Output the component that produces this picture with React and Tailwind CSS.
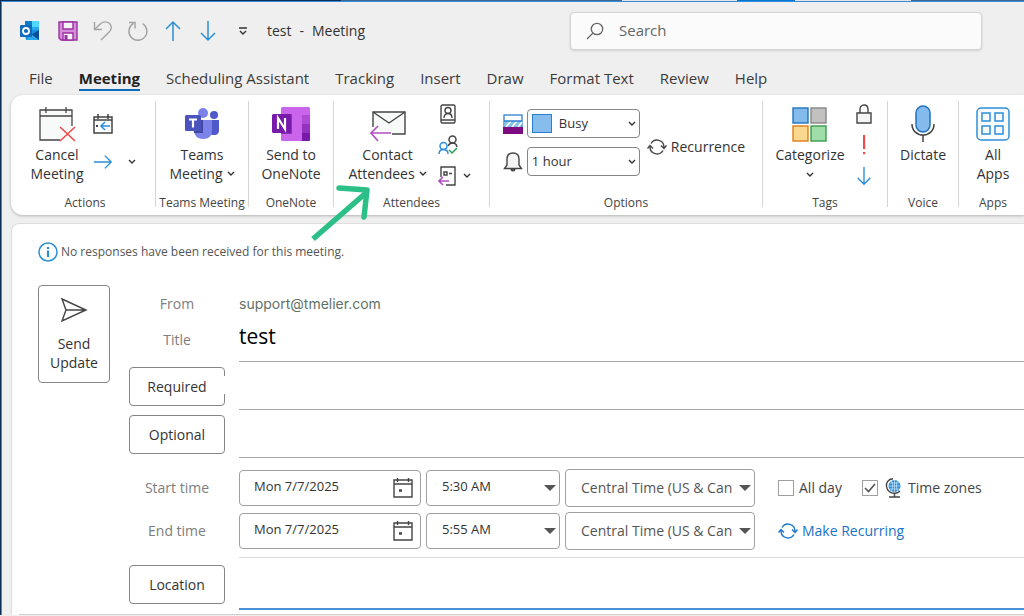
import { useState } from "react";

const tabs = ["File", "Meeting", "Scheduling Assistant", "Tracking", "Insert", "Draw", "Format Text", "Review", "Help"];

function Caret({ className = "" }) {
    return (
        <svg className={className} width="8" height="6" viewBox="0 0 8 6" fill="none" stroke="#333" strokeWidth="1.4">
            <path d="M1 1l3 3 3-3" />
        </svg>
    );
}

function OutlookIcon() {
    return (
        <svg width="22" height="22" viewBox="0 0 22 22">
            <rect x="6" y="1" width="14" height="12" fill="#28a8ea" />
            <rect x="13" y="1" width="7" height="6" fill="#50d9ff" />
            <rect x="6" y="1" width="7" height="5" fill="#0f7cc9" />
            <path d="M5 10h15v10H7z" fill="#1490df" />
            <path d="M12 15l8-5v10h-4z" fill="#0a4f94" />
            <path d="M7 20h13l-8-6z" fill="#28a8ea" />
            <rect x="1" y="5" width="12" height="12" rx="1" fill="#0f6cbd" />
            <circle cx="7" cy="11" r="3" fill="none" stroke="#fff" strokeWidth="1.8" />
        </svg>
    );
}

function SaveIcon() {
    return (
        <svg width="22" height="22" viewBox="0 0 22 22" stroke="#9b2fa3" strokeWidth="1.4">
            <path d="M2 2h18v18H4l-2-2z" fill="#d48fd8" />
            <path d="M6 2h10v7H6z" fill="#f5f5f5" />
            <path d="M6 20v-7h10v7z" fill="#f5f5f5" />
            <path d="M9 15v5" strokeWidth="3" />
        </svg>
    );
}

function UndoIcon() {
    return (
        <svg width="22" height="22" viewBox="0 0 22 22" fill="none" stroke="#a3a3a3" strokeWidth="1.4">
            <path d="M2.5 2v7.5H10M2.5 9.5L8 4.2c3-3 7-3 9.500-.7 2.600 2.500 2.300 6-.3 8.500L9 20" />
        </svg>
    );
}

function RedoIcon() {
    return (
        <svg width="22" height="22" viewBox="0 0 22 22" fill="none" stroke="#a3a3a3" strokeWidth="1.4">
            <path d="M15.5 3.500a9 9 0 1 1-9-.1M2 2.500h6v6" />
        </svg>
    );
}

function ArrowIcon({ d, size = 22 }) {
    return (
        <svg width={size} height={size} viewBox="0 0 22 22" fill="none" stroke="#2b8fd8" strokeWidth="1.5">
            <path d={d} />
        </svg>
    );
}

const ARROW_UP = "M11 21V2M4 9l7-7 7 7";
const ARROW_DOWN = "M11 1v19M4 13l7 7 7-7";
const ARROW_RIGHT = "M1 11h19M13 4l7 7-7 7";

function CancelIcon() {
    return (
        <svg width="38" height="36" viewBox="0 0 38 36" fill="none" stroke="#444" strokeWidth="1.3">
            <path d="M34 20V4H2v30h20" fill="#f8f9f9" />
            <path d="M2 10h32M8 1v6M28 1v6" />
            <path d="M22 21l15 14M37 21L22 35" stroke="#ef4a4a" strokeWidth="1.6" />
        </svg>
    );
}

function CalendarBackIcon() {
    return (
        <svg width="20" height="20" viewBox="0 0 20 20" fill="none" stroke="#444" strokeWidth="1.5">
            <path d="M1 3h18v16H1zM1 6h18M5 0v5M15 0v5" />
            <path d="M17 12H8M12 8l-4 4 4 4" stroke="#2b8fd8" />
            <path d="M3 12h2" strokeWidth="2" />
        </svg>
    );
}

function TeamsIcon() {
    return (
        <svg width="36" height="34" viewBox="0 0 36 34">
            <circle cx="30" cy="8" r="4" fill="#5059c9" />
            <circle cx="19" cy="6" r="5" fill="#7b83eb" />
            <path d="M24 13h11v10c0 4-2 5-5 5-4 0-6-2-6-5z" fill="#5059c9" />
            <path d="M10 13h18v10c0 6-3 9-9 9s-9-4-9-9z" fill="#7b83eb" />
            <path d="M10 13h9v13h-9z" fill="#414a9f" />
            <rect x="1" y="8" width="16" height="16" rx="1.5" fill="#4b53bc" />
            <path d="M5 12.5h8M9 12.5v8" stroke="#fff" strokeWidth="2.2" />
        </svg>
    );
}

function OneNoteIcon() {
    return (
        <svg width="40" height="36" viewBox="0 0 40 36">
            <rect x="10" y="1" width="29" height="34" rx="1.5" fill="#ca64ea" />
            <path d="M31 9h8v9h-8z" fill="#ae4bd5" />
            <path d="M31 18h8v9h-8z" fill="#9332bf" />
            <path d="M31 27h8v6.500q0 1.500-1.500 1.500H31z" fill="#7719aa" />
            <path d="M10 8h11v20H10z" fill="#8a35b5" />
            <rect x="1" y="8" width="19" height="19" rx="1.5" fill="#7719aa" />
            <path d="M7 23V12l7 11V12" fill="none" stroke="#fff" strokeWidth="2.2" />
        </svg>
    );
}

function ContactIcon() {
    return (
        <svg width="38" height="36" viewBox="0 0 38 36" fill="none" stroke="#444" strokeWidth="1.4">
            <path d="M4 21V6h32v22H23" fill="#f8f9f9" />
            <path d="M4 6l16 11L36 6" />
            <path d="M22 27H2M9 20l-7 7 7 8" stroke="#b14fc0" strokeWidth="1.6" />
        </svg>
    );
}

function AddressBookIcon() {
    return (
        <svg width="20" height="20" viewBox="0 0 20 20" fill="none" stroke="#444" strokeWidth="1.4">
            <rect x="3" y="1" width="14" height="18" rx="1.5" />
            <path d="M3 16h14M6 14c0-3 1.500-4.500 4-4.500s4 1.500 4 4.500" />
            <circle cx="10" cy="6.5" r="3" />
        </svg>
    );
}

function PeopleCheckIcon() {
    return (
        <svg width="20" height="20" viewBox="0 0 20 20" fill="none" strokeWidth="1.5">
            <circle cx="14.5" cy="4.5" r="3.5" stroke="#444" />
            <path d="M10 11c1-2 2.500-3 4.500-3s4 1 4.500 4" stroke="#444" />
            <circle cx="5.5" cy="11" r="3.5" stroke="#2b8fd8" />
            <path d="M1 19c0-3 2-4.500 4.500-4.500S10 16 10 19" stroke="#2b8fd8" />
            <path d="M11 15l3 3 5-5" stroke="#2e9e4f" />
        </svg>
    );
}

function ResponseIcon() {
    return (
        <svg width="20" height="20" viewBox="0 0 20 20" fill="none" stroke="#444" strokeWidth="1.4">
            <path d="M3 11V1h14v18H8M6 6h3v3H6zM11 7.500h3" />
            <path d="M11 15H1M5 11l-4 4 4 4" stroke="#b14fc0" strokeWidth="1.6" />
        </svg>
    );
}

function ShowAsIcon() {
    return (
        <svg width="20" height="20" viewBox="0 0 20 20">
            <rect x="1" y="1" width="18" height="12" fill="#fff" stroke="#2b7fd0" strokeWidth="1.3" />
            <path d="M1.5 7h17v5.500h-17z" fill="#8cc3ee" />
            <path d="M3 13l5-6M9 13l5-6M15 13l4-5" stroke="#fff" strokeWidth="1.5" />
            <path d="M1 7h18" stroke="#2b7fd0" strokeWidth="1.3" />
            <path d="M0 13h20v7H0z" fill="#7d0a80" />
        </svg>
    );
}

function BellIcon() {
    return (
        <svg width="20" height="20" viewBox="0 0 20 20" fill="none" stroke="#444" strokeWidth="1.4">
            <path d="M4 13V7c0-4 2.500-6 6-6s6 2 6 6v6l2.500 3.500h-17z" fill="#f5f5f5" />
            <path d="M8 17c.5 2.500 3.500 2.500 4 0" fill="#555" />
        </svg>
    );
}

function RecurIcon({ color }) {
    return (
        <svg width="20" height="20" viewBox="0 0 20 20" fill="none" stroke={color} strokeWidth="1.4">
            <path d="M4 6.500a7 7 0 0 1 13 3.500M16 13.500A7 7 0 0 1 3 10" />
            <path d="M14 8.500l3 3 2.500-3M.5 11.500l2.500-3 3 3" />
        </svg>
    );
}

function CategorizeIcon() {
    return (
        <svg width="36" height="36" viewBox="0 0 36 36" strokeWidth="1.4">
            <rect x="1" y="2" width="15" height="15" fill="#83bbec" stroke="#2273bd" />
            <rect x="19" y="2" width="15" height="15" fill="#c2c1c0" stroke="#868686" />
            <rect x="1" y="20" width="15" height="15" fill="#f9d98f" stroke="#e27d16" />
            <rect x="19" y="20" width="15" height="15" fill="#9fdea9" stroke="#3a9a4e" />
        </svg>
    );
}

function LockIcon() {
    return (
        <svg width="20" height="20" viewBox="0 0 20 20" fill="none" stroke="#444" strokeWidth="1.4">
            <path d="M3 9h14v10H3z" fill="#f5f5f5" />
            <path d="M6 9V5.500C6 3 7.500 1 10 1s4 2 4 4.500V9" />
        </svg>
    );
}

function ImportanceIcon() {
    return (
        <svg width="20" height="20" viewBox="0 0 20 20" fill="#ef4a4a">
            <path d="M9 0h2.200v14H9zM9 17h2.200v2.200H9z" />
        </svg>
    );
}

function MicIcon() {
    return (
        <svg width="24" height="38" viewBox="0 0 24 38" fill="none">
            <rect x="5" y="1" width="14" height="26" rx="7" fill="#83bbec" stroke="#2273bd" strokeWidth="1.5" />
            <path d="M1 19c0 7 5 11 11 11s11-4 11-11M12 30v7" stroke="#444" strokeWidth="1.5" />
        </svg>
    );
}

function AppsIcon() {
    return (
        <svg width="34" height="34" viewBox="0 0 34 34" fill="none" stroke="#2b8fd8" strokeWidth="1.5">
            <rect x="1" y="1" width="32" height="32" rx="4" fill="#f8fafc" />
            <path d="M6 6h8v8H6zM19 6h8v8h-8zM6 19h8v8H6zM19 19h8v8h-8z" />
        </svg>
    );
}

function SendIcon() {
    return (
        <svg width="28" height="24" viewBox="0 0 28 24" fill="none" stroke="#444" strokeWidth="1.4">
            <path d="M2 1l24 11L2 23l4-11zM6 12h20" />
        </svg>
    );
}

function CalendarIcon() {
    return (
        <svg width="20" height="20" viewBox="0 0 20 20" fill="none" stroke="#444" strokeWidth="1.4">
            <path d="M1 2h18v17H1zM1 6h18M4.500 0v4M15.500 0v4" />
            <path d="M6 12.500h3" strokeWidth="2.5" />
        </svg>
    );
}

function GlobeIcon() {
    return (
        <svg width="18" height="20" viewBox="0 0 18 20" fill="none">
            <circle cx="9.5" cy="8" r="6" fill="#2b8fd8" />
            <path d="M4 8h11M5 5h9M5 11h9M9.500 2v12M6.500 3c1.500 3 1.500 7 0 10M12.500 3c-1.500 3-1.500 7 0 10" stroke="#cfe8fa" strokeWidth="0.7" />
            <path d="M8 .7C3 1 1 5 1.500 8.500c.5 4 4 7 8.500 6.700 2-.1 4-1 5-2.200M9.500 15v3.500M4 19h11" stroke="#444" strokeWidth="1.4" />
        </svg>
    );
}

function Group({ label, className = "", last, children }) {
    return (
        <>
            <section className={`flex shrink-0 flex-col ${className}`}>
                <div className="flex h-[94px] justify-center">{children}</div>
                <div className="text-center text-[12px] leading-4 whitespace-nowrap text-[#444]">{label}</div>
            </section>
            {!last && <div className="h-[106px] w-px shrink-0 bg-[#d4d4d4]" />}
        </>
    );
}

function BigButton({ icon, lines, caret, caretBelow }) {
    return (
        <button className="flex shrink-0 flex-col items-center pt-[3px] text-[14px] leading-[19px] whitespace-nowrap">
            <span className="mb-px flex h-10 items-center">{icon}</span>
            {lines.map((line, i) => (
                <span key={line} className="flex items-center gap-1">
                    {line}
                    {caret && i === lines.length - 1 && <Caret />}
                </span>
            ))}
            {caretBelow && <Caret className="mt-2" />}
        </button>
    );
}

function IconButton({ label, children }) {
    return (
        <button aria-label={label} className="flex h-[22px] w-[22px] items-center justify-center">
            {children}
        </button>
    );
}

function MoreButton({ label }) {
    return (
        <button aria-label={label} className="flex h-[22px] w-4 items-center justify-center">
            <Caret />
        </button>
    );
}

function Row({ label, labelFor, button, notch, className = "", children }) {
    return (
        <div className="flex gap-[14px]">
            <div className="flex w-24 shrink-0 items-center justify-center">
                {button ? (
                    <button type="button" className="relative mt-px h-[39px] w-full rounded border border-[#858585] text-[#333]">
                        {label}
                        {notch && <span className="absolute top-2 -right-px h-[18px] w-[3px] bg-white" />}
                    </button>
                ) : (
                    <label htmlFor={labelFor} className="text-[#7d7d7d]">{label}</label>
                )}
            </div>
            <div className={`flex min-w-0 flex-1 items-center ${className}`}>{children}</div>
        </div>
    );
}

function DropDown({ label, value, className = "", box = "" }) {
    return (
        <div className={`relative flex ${box}`}>
            <select aria-label={label} className={`w-full appearance-none rounded border border-[#a0a0a0] bg-white pl-[15px] ${className}`}>
                <option>{value}</option>
            </select>
            <svg className="pointer-events-none absolute top-1/2 right-1 -translate-y-1/2" width="12" height="6" viewBox="0 0 12 6" fill="#555">
                <path d="M0 0h12L6 6z" />
            </svg>
        </div>
    );
}

function TimeFields({ id, name, time }) {
    return (
        <>
            <div className="relative w-[182px]">
                <input id={id} defaultValue="Mon 7/7/2025" className="h-9 w-full rounded border border-[#a0a0a0] pb-1 pl-[14px] text-[13px] text-[#333]" />
                <button type="button" aria-label={`${name} calendar`} className="absolute top-2 right-2">
                    <CalendarIcon />
                </button>
            </div>
            <DropDown label={name} value={time} box="ml-[5px] w-[134px]" className="h-9 pb-1 text-[13px] text-[#333]" />
            <DropDown label={`${name} zone`} value="Central Time (US & Can" box="ml-[5px] w-[190px]" className="h-[38px] text-[14px] text-[#555]" />
        </>
    );
}

function CheckBox({ label, icon, defaultChecked = false }) {
    const [on, setOn] = useState(defaultChecked);
    return (
        <label className="flex items-center text-[14px] text-[#444]">
            <span className="relative mr-[5px] flex">
                <input type="checkbox" checked={on} onChange={() => setOn(!on)} className="h-4 w-4 appearance-none border border-[#a0a0a0] bg-white" />
                {on && (
                    <svg className="pointer-events-none absolute top-0 left-0" width="16" height="16" viewBox="0 0 16 16" fill="none" stroke="#555" strokeWidth="1.6">
                        <path d="M3 8l3.500 3.500L13 4" />
                    </svg>
                )}
            </span>
            {icon && <span className="mr-[5px] ml-[2px]">{icon}</span>}
            {label}
        </label>
    );
}

function TitleBar() {
    return (
        <header className="flex h-14 items-center pt-px">
            <div className="flex w-[568px] shrink-0 items-center gap-[13px] pl-[17px]">
                <span className="mr-[3px]"><OutlookIcon /></span>
                <IconButton label="Save"><SaveIcon /></IconButton>
                <IconButton label="Undo"><UndoIcon /></IconButton>
                <IconButton label="Redo"><RedoIcon /></IconButton>
                <IconButton label="Previous item"><ArrowIcon d={ARROW_UP} /></IconButton>
                <IconButton label="Next item"><ArrowIcon d={ARROW_DOWN} /></IconButton>
                <IconButton label="Customize toolbar">
                    <svg width="10" height="8" viewBox="0 0 10 8" fill="none" stroke="#333" strokeWidth="1.4">
                        <path d="M1 1h8M2 4l3 3 3-3" />
                    </svg>
                </IconButton>
                <h1 className="flex gap-2 text-[14px] text-[#333]">
                    <span>test</span>
                    <span>-</span>
                    <span>Meeting</span>
                </h1>
            </div>
            <label className="mr-[42px] flex h-[38px] flex-1 items-center gap-[15px] rounded border border-[#d4d4d4] bg-[#fafbfa] pl-[15px] shadow-sm">
                <svg width="18" height="18" viewBox="0 0 18 18" fill="none" stroke="#666" strokeWidth="1.3">
                    <circle cx="11" cy="7" r="5.7" />
                    <path d="M7 11l-6 6" />
                </svg>
                <input aria-label="Search" placeholder="Search" className="min-w-0 flex-1 bg-transparent text-[15px] outline-none placeholder:text-[#666]" />
            </label>
        </header>
    );
}

function Tabs() {
    return (
        <nav className="flex gap-[26px] pt-[9px] pb-1 pl-[27px] text-[15px] leading-[22px] text-[#3b3b3b]">
            {tabs.map((tab) => (
                <a
                    key={tab}
                    href="#"
                    className={tab === "Meeting" ? "border-b-2 border-[#0f6cbd] font-bold text-[#222]" : "border-b-2 border-transparent"}
                >
                    {tab}
                </a>
            ))}
        </nav>
    );
}

function Ribbon() {
    return (
        <div className="relative ml-[9px]">
            <div className="flex overflow-hidden rounded-l-xl bg-white pt-[6px] pb-1 text-[#333] shadow-[0_1px_3px_rgba(0,0,0,0.25)]">
                <Group label="Actions" className="w-36 pl-1">
                    <BigButton icon={<CancelIcon />} lines={["Cancel", "Meeting"]} />
                    <div className="ml-2 flex flex-col gap-4 pt-3">
                        <IconButton label="Reply to meeting"><CalendarBackIcon /></IconButton>
                        <IconButton label="Forward"><ArrowIcon d={ARROW_RIGHT} size={20} /></IconButton>
                    </div>
                    <div className="ml-[10px] flex flex-col pt-[50px]">
                        <MoreButton label="More actions" />
                    </div>
                </Group>
                <Group label="Teams Meeting" className="w-[92px]">
                    <BigButton icon={<TeamsIcon />} lines={["Teams", "Meeting"]} caret />
                </Group>
                <Group label="OneNote" className="w-[84px]">
                    <BigButton icon={<OneNoteIcon />} lines={["Send to", "OneNote"]} />
                </Group>
                <Group label="Attendees" className="w-[155px]">
                    <BigButton icon={<ContactIcon />} lines={["Contact", "Attendees"]} caret />
                    <div className="ml-[10px] flex flex-col gap-[9px] pt-[2px]">
                        <IconButton label="Address book"><AddressBookIcon /></IconButton>
                        <IconButton label="Check names"><PeopleCheckIcon /></IconButton>
                        <IconButton label="Response options"><ResponseIcon /></IconButton>
                    </div>
                    <div className="flex flex-col pt-16">
                        <MoreButton label="More response options" />
                    </div>
                </Group>
                <Group label="Options" className="w-[272px]">
                    <div className="flex items-start">
                        <div className="flex flex-col gap-[9px] pt-2">
                            <div className="flex items-center gap-1">
                                <ShowAsIcon />
                                <div className="relative">
                                    <select aria-label="Show as" className="h-[29px] w-[113px] appearance-none rounded border border-[#858585] pl-[31px] text-[13px]">
                                        <option>Busy</option>
                                    </select>
                                    <span className="pointer-events-none absolute top-[5px] left-[5px] h-[19px] w-5 border border-[#2b7fd0] bg-[#86bdec]" />
                                    <Caret className="pointer-events-none absolute top-3 right-1" />
                                </div>
                            </div>
                            <div className="flex items-center gap-1">
                                <BellIcon />
                                <div className="relative">
                                    <select aria-label="Reminder" className="h-[29px] w-[113px] appearance-none rounded border border-[#858585] pl-1 text-[13px]">
                                        <option>1 hour</option>
                                    </select>
                                    <Caret className="pointer-events-none absolute top-3 right-1" />
                                </div>
                            </div>
                        </div>
                        <button className="mt-[35px] mr-1 ml-[7px] flex items-center gap-1 text-[14px]">
                            <RecurIcon color="#444" />
                            Recurrence
                        </button>
                    </div>
                </Group>
                <Group label="Tags" className="w-[124px]">
                    <BigButton icon={<CategorizeIcon />} lines={["Categorize"]} caretBelow />
                    <div className="ml-2 flex flex-col gap-[9px] pt-[2px]">
                        <IconButton label="Private"><LockIcon /></IconButton>
                        <IconButton label="High importance"><ImportanceIcon /></IconButton>
                        <IconButton label="Low importance"><ArrowIcon d={ARROW_DOWN} size={20} /></IconButton>
                    </div>
                </Group>
                <Group label="Voice" className="w-[70px]">
                    <BigButton icon={<MicIcon />} lines={["Dictate"]} />
                </Group>
                <Group label="Apps" className="w-[68px]" last>
                    <BigButton icon={<AppsIcon />} lines={["All", "Apps"]} />
                </Group>
            </div>
            {/* callout arrow over the Attendees group */}
            <svg className="pointer-events-none absolute top-[88px] left-[298px] z-10" width="66" height="60" viewBox="0 0 66 60" fill="none" stroke="#2dbf88" strokeWidth="5.5" strokeLinejoin="round">
                <path d="M4 56L58 9" />
                <path d="M30 5l28 2-3 27" strokeLinecap="round" />
            </svg>
        </div>
    );
}

function MeetingForm() {
    return (
        <main className="mt-2 ml-[9px] rounded-tl-lg border-t border-l border-[#dedede] bg-white pt-[18px] text-[14px] leading-5">
            <div className="flex items-center gap-[3px] pl-[26px]">
                <svg width="20" height="20" viewBox="0 0 20 20" fill="none" stroke="#2b8fd8" strokeWidth="1.5">
                    <circle cx="10" cy="10" r="9" />
                    <path d="M10 8.500V15M10 5v2" strokeWidth="2.2" />
                </svg>
                <p className="text-[12px] text-[#555]">No responses have been received for this meeting.</p>
            </div>
            <div className="flex gap-[19px] pt-[23px] pl-[26px]">
                <button className="flex h-[98px] w-[72px] shrink-0 flex-col items-center rounded border border-[#858585] pt-3 leading-[19px] text-[#333]">
                    <SendIcon />
                    <span className="mt-3">Send</span>
                    <span>Update</span>
                </button>
                <form className="min-w-0 flex-1 pt-[5px]">
                    <Row label="From" className="h-7">
                        <p className="font-['Inter',sans-serif] text-[14px] text-[#5f7267]">support@tmelier.com</p>
                    </Row>
                    <Row label="Title" labelFor="title" className="h-[44px] border-b border-[#a8a8a8]">
                        <input id="title" defaultValue="test" className="mb-2 w-full text-[21px] leading-7 text-black outline-none" />
                    </Row>
                    <Row label="Required" button notch className="h-12 border-b border-[#a8a8a8]">
                        <input aria-label="Required attendees" className="w-full outline-none" />
                    </Row>
                    <Row label="Optional" button className="h-12 border-b border-[#a8a8a8]">
                        <input aria-label="Optional attendees" className="w-full outline-none" />
                    </Row>
                    <div className="pt-2">
                        <Row label="Start time" labelFor="start" className="h-[43px]">
                            <TimeFields id="start" name="Start time" time="5:30 AM" />
                            <div className="ml-[23px] flex shrink-0 gap-5 whitespace-nowrap">
                                <CheckBox label="All day" />
                                <CheckBox label="Time zones" icon={<GlobeIcon />} defaultChecked />
                            </div>
                        </Row>
                    </div>
                    <Row label="End time" labelFor="end" className="h-[43px]">
                        <TimeFields id="end" name="End time" time="5:55 AM" />
                        <a href="#" className="ml-[23px] flex items-center gap-1 whitespace-nowrap text-[#1a73c7]">
                            <RecurIcon color="#1a73c7" />
                            Make Recurring
                        </a>
                    </Row>
                    <div className="mt-[5px] ml-[110px] h-px bg-[#dcdcdc]" />
                    <Row label="Location" button className="h-[52px] border-b-2 border-[#4a90d9]">
                        <input aria-label="Location" className="w-full outline-none" />
                    </Row>
                </form>
            </div>
            <div className="mt-1 ml-[7px] h-px bg-[#cfcfcf]" />
        </main>
    );
}

export default function App() {
    return (
        <div className="min-h-screen overflow-hidden bg-[#efefef] font-['Open_Sans',sans-serif]">
            <div className="flex h-px">
                <div className="w-1/3 bg-[#0b2f57]" />
                <div className="flex-1 bg-[#3a6a99]" />
                <div className="w-[115px] bg-[#e4e4e4]" />
                <div className="w-[58px] bg-[#0078d4]" />
                <div className="w-[116px] bg-[#e4e4e4]" />
                <div className="w-[113px] bg-[#3a6a99]" />
            </div>
            <div className="ml-px border-t border-l border-[#3b8ad6] shadow-[-1px_0_0_#0b2f57]">
                <TitleBar />
                <Tabs />
                <Ribbon />
                <MeetingForm />
            </div>
        </div>
    );
}
